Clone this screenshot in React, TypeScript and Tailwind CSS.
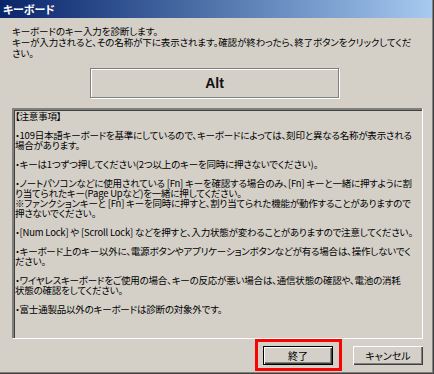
const jp = { fontFamily: "'Noto Sans CJK JP', 'Noto Sans', sans-serif", fontFeatureSettings: "'palt'" };

const intro = [
  'キーボードのキー入力を診断します。',
  'キーが入力されると、その名称が下に表示されます。確認が終わったら、終了ボタンをクリックしてくだ',
  'さい。',
];

const notes: string[][] = [
  ['・109日本語キーボードを基準にしているので、キーボードによっては、刻印と異なる名称が表示される', '場合があります。'],
  ['・キーは1つずつ押してください(2つ以上のキーを同時に押さないでください)。'],
  [
    '・ノートパソコンなどに使用されている [Fn] キーを確認する場合のみ、[Fn] キーと一緒に押すように割',
    'り当てられたキー(Page Upなど)を一緒に押してください。',
    '※ファンクションキーと [Fn] キーを同時に押すと、割り当てられた機能が動作することがありますので',
    '押さないでください。',
  ],
  ['・[Num Lock] や [Scroll Lock] などを押すと、入力状態が変わることがありますので注意してください。'],
  ['・キーボード上のキー以外に、電源ボタンやアプリケーションボタンなどが有る場合は、操作しないでく', 'ださい。'],
  ['・ワイヤレスキーボードをご使用の場合、キーの反応が悪い場合は、通信状態の確認や、電池の消耗', '状態の確認をしてください。'],
  ['・富士通製品以外のキーボードは診断の対象外です。'],
];

export default function App() {
  return (
    <div
      className="w-[434px] h-[374px] bg-[#d4d0c8] text-black shadow-[inset_-1px_-1px_0_#404040,inset_-2px_-2px_0_#808080] overflow-hidden"
      style={jp}
    >
      {/* title bar */}
      <div className="h-[18px] mr-[2px] flex items-center pl-[3px] bg-gradient-to-r from-[#0a246a] to-[#a6caf0]">
        <span className="text-white text-[11px] font-bold leading-none">キーボード</span>
      </div>

      <div className="px-[12px] pt-[8px]">
        <div className="text-[9.5px] leading-[11px] tracking-[-0.1px] whitespace-nowrap">
          {intro.map((l, i) => <div key={i}>{l}</div>)}
        </div>

        {/* key display */}
        <div className="ml-[78px] mt-[9px] w-[249px] h-[30px] border border-[#808080] shadow-[inset_1px_1px_0_#fff,1px_1px_0_#fff] flex items-center justify-center">
          <span className="text-[14px] font-bold text-[#111]" style={{ fontFamily: "'Liberation Sans', Arial, sans-serif" }}>Alt</span>
        </div>

        {/* notes */}
        <div className="mt-[10px] w-[410px] h-[230px] border-t-2 border-l-2 border-t-[#808080] border-l-[#808080] shadow-[1px_1px_0_#fff] relative">
          <div className="absolute inset-0 border-t border-l border-[#404040] pointer-events-none" />
          <div className="pl-[1px] pt-[1px] text-[9.5px] leading-[10px] tracking-[-0.2px] whitespace-nowrap flex flex-col gap-[9px]">
            <div>【注意事項】</div>
            {notes.map((p, i) => (
              <div key={i}>
                {p.map((l, j) => <div key={j}>{l}</div>)}
              </div>
            ))}
          </div>
        </div>

        {/* buttons */}
        <div className="mt-[8px] -mr-[1px] flex justify-end gap-[20px] text-[10px]">
          <div className="relative">
            <button className="w-[70px] h-[19px] bg-[#d4d0c8] border border-black shadow-[inset_1px_1px_0_#fff,inset_-1px_-1px_0_#404040,inset_-2px_-2px_0_#808080] flex items-center justify-center leading-none">
              終了
            </button>
            <div className="absolute -left-[8px] -top-[7px] -right-[9px] -bottom-[6px] border-[3px] border-[#ff0000] pointer-events-none" />
          </div>
          <button className="w-[70px] h-[19px] bg-[#d4d0c8] shadow-[inset_1px_1px_0_#fff,inset_-1px_-1px_0_#404040,inset_-2px_-2px_0_#808080] flex items-center justify-center leading-none">
            キャンセル
          </button>
        </div>
      </div>
    </div>
  );
}
